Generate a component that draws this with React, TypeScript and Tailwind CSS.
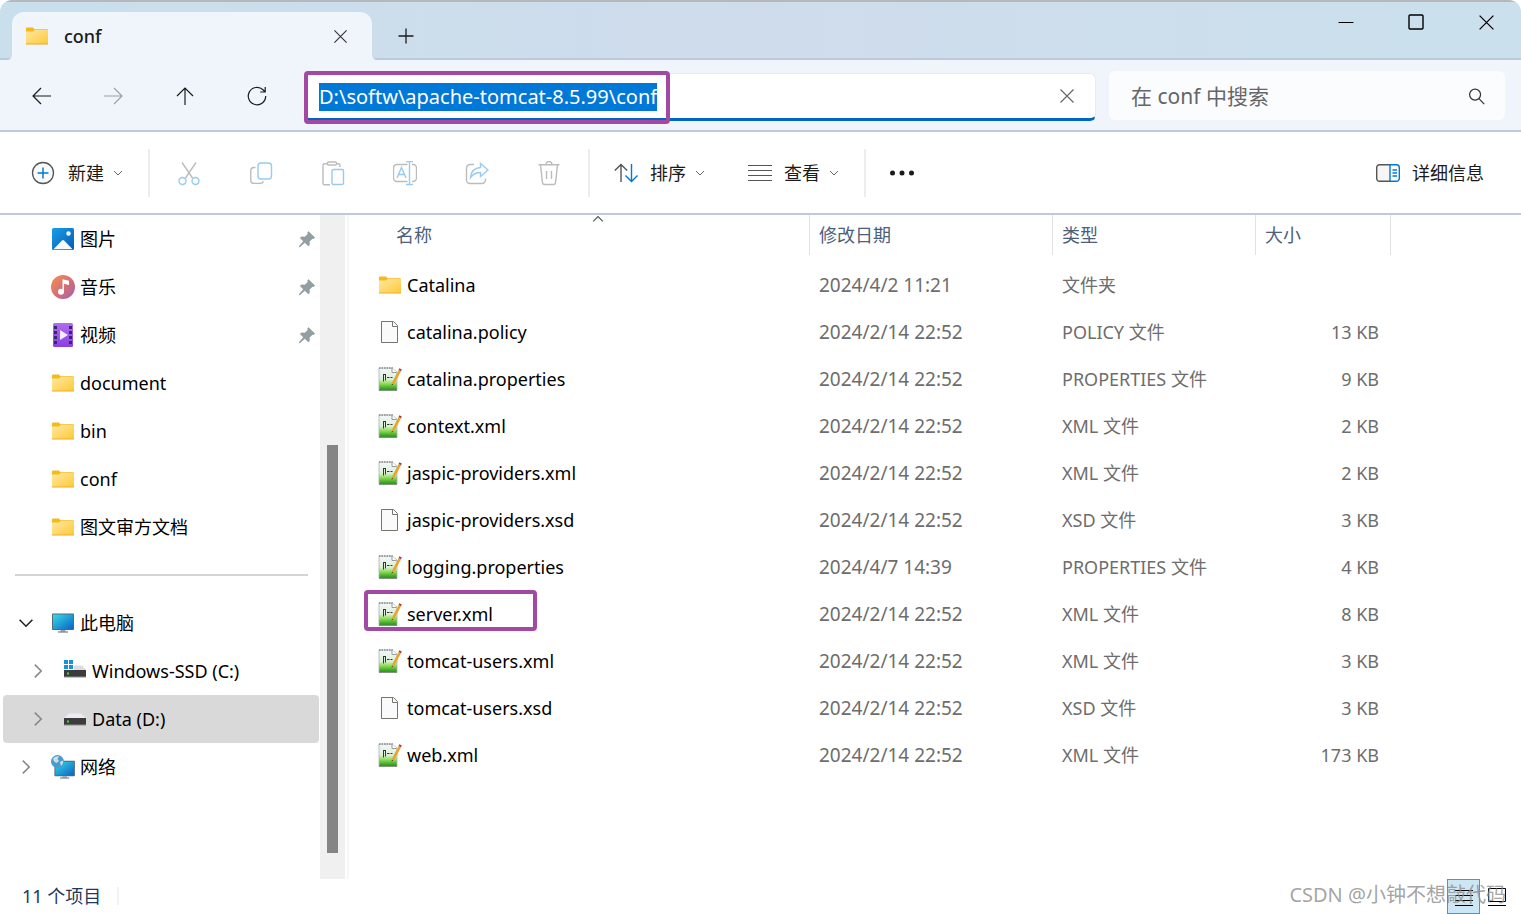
import React, { useEffect, useRef } from 'react'

type IconProps = { className?: string }

const FolderIcon: React.FC<IconProps> = ({ className = 'w-6 h-6' }) => (
  <svg viewBox="0 0 24 24" className={className} fill="none">
    <defs>
      <linearGradient id="folderFace" x1="0" y1="0" x2="1" y2="1">
        <stop offset="0" stopColor="#ffe8a3" />
        <stop offset="1" stopColor="#fdc937" />
      </linearGradient>
    </defs>
    <path d="M1 4.5a1 1 0 0 1 1-1h6l1.500 1.800H22a1 1 0 0 1 1 1V8H1z" fill="#f9b81a" />
    <path d="M1 7.500h7.200l1.400-1.600H23v14.200H1z" fill="url(#folderFace)" />
    <path d="M1 19.600h22v.9H1z" fill="#eda91c" />
  </svg>
)

const PictureIcon = () => (
  <svg viewBox="0 0 24 24" className="w-6 h-6">
    <defs>
      <linearGradient id="picBg" x1="0" y1="0" x2="1" y2="1">
        <stop offset="0" stopColor="#17a0ea" />
        <stop offset="1" stopColor="#0a59b0" />
      </linearGradient>
    </defs>
    <rect x="1" y="1" width="22" height="22" rx="1.5" fill="url(#picBg)" />
    <path d="M2.5 22.3 11 13.6a1.5 1.5 0 0 1 2.1 0l8.5 8.7z" fill="#f4f9fd" />
    <circle cx="17.5" cy="6.5" r="2.2" fill="#f4f9fd" />
  </svg>
)

const MusicIcon = () => (
  <svg viewBox="0 0 24 24" className="w-6 h-6">
    <defs>
      <linearGradient id="musicBg" x1="0" y1="0" x2="1" y2="1">
        <stop offset="0.1" stopColor="#f08a55" />
        <stop offset="0.6" stopColor="#cf6c7c" />
        <stop offset="1" stopColor="#a060b8" />
      </linearGradient>
    </defs>
    <circle cx="12" cy="12" r="12" fill="url(#musicBg)" />
    <circle cx="10" cy="16.8" r="3" fill="#fff" />
    <path d="M11.5 4.2 18 5.8v4.2l-5-1.2v8h-1.5z" fill="#fff" />
  </svg>
)

const VideoIcon = () => (
  <svg viewBox="0 0 24 24" className="w-6 h-6">
    <defs>
      <linearGradient id="videoBg" x1="0" y1="0" x2="0" y2="1">
        <stop offset="0" stopColor="#b06cf2" />
        <stop offset="1" stopColor="#8a3fe0" />
      </linearGradient>
    </defs>
    <rect x="2" y="0" width="20" height="24" rx="1.5" fill="url(#videoBg)" />
    {[3, 8, 13, 18].map((y) => (
      <g key={y} fill="#3d2470">
        <rect x="3" y={y} width="3" height="3" />
        <rect x="18" y={y} width="3" height="3" />
      </g>
    ))}
    <path d="M9 7v10l8-5z" fill="#f3ecfb" />
  </svg>
)

const MonitorShape = () => (
  <>
    <defs>
      <linearGradient id="screen" x1="0" y1="0" x2="1" y2="1">
        <stop offset="0" stopColor="#35dbe8" />
        <stop offset="1" stopColor="#0b63c4" />
      </linearGradient>
    </defs>
    <rect x="1" y="2.5" width="22" height="16.5" rx="0.8" fill="#4e6a7c" />
    <rect x="2" y="3.5" width="20" height="14.5" fill="url(#screen)" />
    <path d="M9.5 19h5v1.6h-5z" fill="#9aa5ad" />
    <path d="M7 20.5h10v1H7z" fill="#56636c" />
  </>
)

const ComputerIcon = () => (
  <svg viewBox="0 0 24 24" className="w-6 h-6">
    <MonitorShape />
  </svg>
)

const NetworkIcon = () => (
  <svg viewBox="0 0 24 24" className="w-6 h-6">
    <g transform="translate(2.5 3.5) scale(0.93)">
      <MonitorShape />
    </g>
    <circle cx="6.5" cy="6.5" r="6.5" fill="#4c9cc9" />
    <path d="M2 3.5C4 1.5 6 1 8 1.5L6.5 4 8 6l-2.5 2L3 6.5zM9 7l3-1.5c.5 2-.5 4-2 5.5z" fill="#c5e0ee" />
  </svg>
)

const DriveIcon: React.FC<{ system?: boolean }> = ({ system }) => (
  <svg viewBox="0 0 24 24" className="w-6 h-6">
    <path d={system ? 'M1 11 5 6.5h14L23 11z' : 'M1 11 6 6.5h12l5 4.5z'} fill={system ? '#dcdce2' : '#ececf0'} />
    <rect x="1" y="11" width="22" height="7" fill="#3c3c3c" />
    <path d="M1 17.5h22v1H1z" fill="#8c8c8c" />
    <rect x="4" y="13.5" width="2" height="2" fill="#2bea2b" />
    {system && (
      <>
        <path d="M0 0h11v11H0z" fill="#fff" />
        <path d="M1 1h4v4H1zM6 1h4v4H6zM1 6h4v4H1zM6 6h4v4H6z" fill="#1592dd" />
      </>
    )}
  </svg>
)

const PinIcon = () => (
  <svg viewBox="0 0 18 18" className="w-[18px] h-[18px]" fill="#929da4">
    <path d="M10.5 1.2 17 7.4l-1.5 1.5-1-.2-2.9 2.9.2 3.200-1.5 1.5-3.500-3.500L2 17l-1.200.3.300-1.300 4.100-4.700L1.900 8l1.500-1.500 3.500.3 2.800-2.900-.4-1.400z" />
  </svg>
)

const BlankFileIcon = () => (
  <svg viewBox="0 0 24 24" className="w-6 h-6" fill="#fafafa" stroke="#76746f">
    <path d="M3.5 1.5h12l4 4v17h-16z" />
    <path d="M14.5 1.5v5h5" />
  </svg>
)

const NotepadIcon = () => (
  <svg viewBox="0 0 24 24" className="w-6 h-6">
    <defs>
      <linearGradient id="npPage" x1="0" y1="0" x2="0" y2="1">
        <stop offset="0" stopColor="#f4f7fa" />
        <stop offset="0.5" stopColor="#dcefd8" />
        <stop offset="0.72" stopColor="#86d84a" />
        <stop offset="1" stopColor="#178c17" />
      </linearGradient>
    </defs>
    <path d="M1 1h13l5 4v18.5H1z" fill="url(#npPage)" stroke="#a9b2b5" strokeWidth="0.8" />
    <path d="M1 1h15" stroke="#5c6568" strokeWidth="1" strokeDasharray="1.5 1" />
    <path d="M14 1v4.5h4.5" fill="#fff" stroke="#7d8588" strokeWidth="0.8" />
    <path d="M1 23.3h18" stroke="#7c8b72" />
    <path d="M5.5 7v7.500M7.500 7v6.500" stroke="#2f3a2f" />
    <path d="M5 7.500h3M9 10.500h2.500M12.500 10.500h2" stroke="#2f3a2f" />
    <path d="m13.5 18.8 1-4L20.600 3l2.400 1.300-6.300 11.800z" fill="#e9a32c" />
    <path d="m20.600 3 .8-1.800 2.400 1.200-.8 1.900z" fill="#a83a50" />
    <path d="m13.5 18.8.5-2 1.200.8z" fill="#4a3a22" />
  </svg>
)

const Chevron: React.FC<IconProps> = ({ className }) => (
  <svg viewBox="0 0 10 10" className={className} fill="none" stroke="currentColor">
    <path d="m1 3 4 4 4-4" />
  </svg>
)

const CloseGlyph: React.FC<IconProps> = ({ className }) => (
  <svg viewBox="0 0 16 16" className={className} fill="none" stroke="currentColor" strokeWidth="1.2">
    <path d="m1.5 1.5 13 13M14.5 1.5l-13 13" />
  </svg>
)

const navButtons = [
  { label: '后退', d: 'M2 10h18M10 2l-8 8 8 8', color: 'text-[#1b1b1b]' },
  { label: '前进', d: 'M1 10h18M11 2l8 8-8 8', color: 'text-[#9da2a6]' },
  { label: '向上', d: 'M10 19V2M2 10l8-8 8 8', color: 'text-[#1b1b1b]' },
  { label: '刷新', d: 'M18.7 10A8.7 8.7 0 1 1 16 3.8l2 2M18.2 1v5h-5', color: 'text-[#1b1b1b]' },
]

const fileActions = [
  {
    label: '剪切',
    gray: 'M5 1.5 15.5 17M19 1.5 8.5 17',
    blue: 'M9 20a3.5 3.5 0 1 1-7 0 3.5 3.5 0 0 1 7 0zM22 20a3.5 3.5 0 1 1-7 0 3.5 3.5 0 0 1 7 0z',
  },
  {
    label: '复制',
    gray: 'M6.5 6.5H5A3.2 3.2 0 0 0 1.8 9.7v9.5A3.2 3.2 0 0 0 5 22.4h6.5a3.2 3.2 0 0 0 3-2.2',
    blue: 'M12 2h7.5a3 3 0 0 1 3 3v10a3 3 0 0 1-3 3H12a3 3 0 0 1-3-3V5a3 3 0 0 1 3-3z',
  },
  {
    label: '粘贴',
    gray: 'M6.5 2.8h-3A1.5 1.5 0 0 0 2 4.3v18a1.5 1.5 0 0 0 1.5 1.5H9M15.5 2.8h2A1.5 1.5 0 0 1 19 4.3V6M7.5 1h7a1 1 0 0 1 1 1v1a1 1 0 0 1-1 1h-7a1 1 0 0 1-1-1V2a1 1 0 0 1 1-1z',
    blue: 'M12.5 8.5H21a1.5 1.5 0 0 1 1.5 1.5v12a1.5 1.5 0 0 1-1.5 1.5h-8.5A1.5 1.5 0 0 1 11 22V10a1.5 1.5 0 0 1 1.5-1.5z',
  },
  {
    label: '重命名',
    gray: 'M14.5 3.5H4A3.5 3.5 0 0 0 .5 7v10A3.5 3.5 0 0 0 4 20.5h10.500M19 3.5h1A3.5 3.5 0 0 1 23.5 7v10a3.5 3.5 0 0 1-3.5 3.5h-1',
    blue: 'M13 .5h7M13 23.5h7M16.5.5v23M4 17 8.5 6.5 13 17M5.5 13.5h6',
  },
  {
    label: '共享',
    gray: 'M9 3.5H5A3.5 3.5 0 0 0 1.5 7v12A3.5 3.5 0 0 0 5 22.5h12a3.5 3.5 0 0 0 3.5-3.5v-1.5',
    blue: 'M15.5 2.5 23 9l-7.5 6.5v-4C11 11.5 8 13 5.5 16.5 6 10.5 9.5 7 15.5 6.5z',
  },
  {
    label: '删除',
    gray: 'M1.5 3.8h21M3.5 3.8l2 18a2 2 0 0 0 2 1.700h9a2 2 0 0 0 2-1.700l2-18M9 3.5a3 3 0 0 1 6 0M9.5 10v8M14.5 10v8',
    blue: '',
  },
]

const quickAccess = [
  { name: '图片', icon: PictureIcon, pinned: true },
  { name: '音乐', icon: MusicIcon, pinned: true },
  { name: '视频', icon: VideoIcon, pinned: true },
  { name: 'document', icon: FolderIcon, pinned: false },
  { name: 'bin', icon: FolderIcon, pinned: false },
  { name: 'conf', icon: FolderIcon, pinned: false },
  { name: '图文审方文档', icon: FolderIcon, pinned: false },
]

const files = [
  { name: 'Catalina', date: '2024/4/2 11:21', type: '文件夹', size: '', icon: FolderIcon },
  { name: 'catalina.policy', date: '2024/2/14 22:52', type: 'POLICY 文件', size: '13 KB', icon: BlankFileIcon },
  { name: 'catalina.properties', date: '2024/2/14 22:52', type: 'PROPERTIES 文件', size: '9 KB', icon: NotepadIcon },
  { name: 'context.xml', date: '2024/2/14 22:52', type: 'XML 文件', size: '2 KB', icon: NotepadIcon },
  { name: 'jaspic-providers.xml', date: '2024/2/14 22:52', type: 'XML 文件', size: '2 KB', icon: NotepadIcon },
  { name: 'jaspic-providers.xsd', date: '2024/2/14 22:52', type: 'XSD 文件', size: '3 KB', icon: BlankFileIcon },
  { name: 'logging.properties', date: '2024/4/7 14:39', type: 'PROPERTIES 文件', size: '4 KB', icon: NotepadIcon },
  { name: 'server.xml', date: '2024/2/14 22:52', type: 'XML 文件', size: '8 KB', icon: NotepadIcon, marked: true },
  { name: 'tomcat-users.xml', date: '2024/2/14 22:52', type: 'XML 文件', size: '3 KB', icon: NotepadIcon },
  { name: 'tomcat-users.xsd', date: '2024/2/14 22:52', type: 'XSD 文件', size: '3 KB', icon: BlankFileIcon },
  { name: 'web.xml', date: '2024/2/14 22:52', type: 'XML 文件', size: '173 KB', icon: NotepadIcon },
]

const TitleBar = () => (
  <header className="flex h-[60px] shrink-0 border-t-2 border-[#b7b8b9] bg-gradient-to-r from-[#c9dfec] via-[#cfdcec] to-[#cae0ec]">
    <div className="w-3 shrink-0 border-b-2 border-[#bccbdc]" />
    <div className="relative mt-[10px] flex w-[360px] items-center rounded-t-xl bg-[#eff5fa] pl-[13px] pr-5">
      <svg viewBox="0 0 6 6" className="absolute -left-1.5 bottom-0 w-1.5 h-1.5" fill="#eff5fa">
        <path d="M6 0v6H0c4 0 6-2 6-6z" />
      </svg>
      <svg viewBox="0 0 6 6" className="absolute -right-1.5 bottom-0 w-1.5 h-1.5" fill="#eff5fa">
        <path d="M0 0v6h6C2 6 0 4 0 0z" />
      </svg>
      <FolderIcon />
      <span className="ml-[15px] flex-1 text-lg font-medium text-[#1b1b1b]">conf</span>
      <button aria-label="关闭标签页" className="flex h-6 w-6 items-center justify-center text-[#333]">
        <CloseGlyph className="w-[15px] h-[15px]" />
      </button>
    </div>
    <div className="flex flex-1 items-start justify-between border-b-2 border-[#bccbdc]">
      <button aria-label="新建标签页" className="flex h-[68px] w-[68px] items-center justify-center">
        <svg viewBox="0 0 16 16" className="w-4 h-4" stroke="#1b1b1b" strokeWidth="1.3">
          <path d="M8 .5v15M.5 8h15" />
        </svg>
      </button>
      <div className="flex h-10">
        <button aria-label="最小化" className="flex w-[70px] items-center justify-center">
          <svg viewBox="0 0 16 16" className="w-4 h-4" stroke="#000">
            <path d="M.5 8.5h15" />
          </svg>
        </button>
        <button aria-label="最大化" className="flex w-[70px] items-center justify-center">
          <svg viewBox="0 0 16 16" className="w-4 h-4" fill="none" stroke="#000" strokeWidth="1.4">
            <rect x="1" y="1" width="14" height="14" rx="1" />
          </svg>
        </button>
        <button aria-label="关闭" className="flex w-[70px] items-center justify-center text-black">
          <CloseGlyph className="w-[17px] h-[17px]" />
        </button>
      </div>
    </div>
  </header>
)

const NavigationBar = () => {
  const addressRef = useRef<HTMLInputElement>(null)

  useEffect(() => {
    addressRef.current?.focus()
    addressRef.current?.select()
  }, [])

  return (
    <nav className="flex h-[72px] shrink-0 items-center border-b-2 border-[#bccbdc] bg-[#eff5fa] pl-[5px] pr-4">
      {navButtons.map((button) => (
        <button key={button.label} aria-label={button.label} className={`flex h-12 w-18 items-center justify-center pt-0.5 ${button.color}`}>
          <svg viewBox="0 0 20 20" className="w-5 h-5" fill="none" stroke="currentColor" strokeWidth="1.2">
            <path d={button.d} />
          </svg>
        </button>
      ))}

      <div className="relative ml-[11px] mt-1 flex h-12 flex-1 items-center rounded-md border border-b-[3px] border-[#e8ecef] border-b-[#0067c0] bg-white pl-[14px] pr-5">
        <input
          ref={addressRef}
          aria-label="地址"
          defaultValue="D:\softw\apache-tomcat-8.5.99\conf"
          className="min-w-0 flex-1 bg-transparent pt-0.5 text-xl text-[#1b1b1b] outline-none selection:bg-[#0078d7] selection:text-white"
        />
        <button aria-label="清除" className="text-[#666]">
          <CloseGlyph className="w-4 h-4" />
        </button>
        <div className="pointer-events-none absolute -left-px -top-[3px] h-[53px] w-[366px] rounded-sm border-4 border-[#a349a4]" />
      </div>

      <label className="ml-[13px] flex h-[49px] w-[396px] items-center rounded-md bg-[#fbfcfe] pl-[22px] pr-5 pt-[3px]">
        <input
          type="search"
          aria-label="搜索"
          placeholder="在 conf 中搜索"
          className="min-w-0 flex-1 bg-transparent text-[21px] text-[#1b1b1b] outline-none placeholder:text-[#666]"
        />
        <svg viewBox="0 0 18 18" className="w-[17px] h-[17px]" fill="none" stroke="#333" strokeWidth="1.3">
          <circle cx="7.5" cy="7" r="5.8" />
          <path d="m11.600 11.200 5.600 5.800" />
        </svg>
      </label>
    </nav>
  )
}

const Separator = () => <div className="h-12 w-0.5 shrink-0 bg-[#ededed]" />

const Toolbar = () => (
  <div className="flex h-[83px] shrink-0 items-center border-b-2 border-[#bccbdc] bg-white text-lg text-[#1b1b1b]">
    <button className="flex h-12 w-[148px] items-center pl-[31px]">
      <svg viewBox="0 0 24 24" className="w-6 h-6" fill="none">
        <circle cx="12" cy="12" r="10.5" stroke="#555" strokeWidth="1.3" fill="#fafafa" />
        <path d="M12 6.5v11M6.5 12h11" stroke="#0078d4" strokeWidth="1.5" />
      </svg>
      <span className="ml-[13px]">新建</span>
      <Chevron className="ml-[9px] w-2.5 h-2.5 text-[#666]" />
    </button>
    <Separator />
    <div className="flex w-[438px] px-[3px]">
      {fileActions.map((action) => (
        <button key={action.label} disabled aria-label={action.label} className="flex h-12 w-18 items-center justify-center pt-0.5">
          <svg viewBox="0 0 24 25" className="w-6 h-[25px]" fill="none" strokeWidth="1.4">
            <path d={action.gray} stroke="#bcbcbc" />
            <path d={action.blue} stroke="#99caf0" />
          </svg>
        </button>
      ))}
    </div>
    <Separator />
    <button className="ml-6 flex h-12 items-center">
      <svg viewBox="0 0 24 20" className="w-6 h-5" fill="none" strokeWidth="1.4">
        <path d="M7 19V1.5M.8 7.5 7 1.5l6.200 6" stroke="#555" />
        <path d="M17.5 1v17.5M11.5 12.5l6 6 6-6" stroke="#0078d4" />
      </svg>
      <span className="ml-3">排序</span>
      <Chevron className="ml-[9px] w-2.5 h-2.5 text-[#666]" />
    </button>
    <button className="ml-[43px] flex h-12 items-center">
      <svg viewBox="0 0 24 18" className="w-6 h-[18px]" stroke="#555" strokeWidth="1.2">
        <path d="M0 1.5h24M0 6.5h24M0 11.5h24M0 16.5h24" />
      </svg>
      <span className="ml-3">查看</span>
      <Chevron className="ml-[9px] w-2.5 h-2.5 text-[#666]" />
    </button>
    <div className="ml-[25px]">
      <Separator />
    </div>
    <button aria-label="更多" className="flex h-12 w-18 items-center justify-center">
      <svg viewBox="0 0 24 6" className="w-6 h-1.5" fill="#1b1b1b">
        <circle cx="2.5" cy="3" r="2.5" />
        <circle cx="12" cy="3" r="2.5" />
        <circle cx="21.5" cy="3" r="2.5" />
      </svg>
    </button>
    <button className="ml-auto mr-[37px] flex h-12 items-center">
      <svg viewBox="0 0 24 18" className="w-6 h-[18px]" fill="none" strokeWidth="1.4">
        <path d="M14 .7H3.5A2.8 2.8 0 0 0 .7 3.5v11a2.8 2.8 0 0 0 2.8 2.8H14" stroke="#555" fill="#f6f6f6" />
        <path d="M14 .7h6.500a2.8 2.8 0 0 1 2.8 2.8v11a2.8 2.8 0 0 1-2.8 2.8H14zM16.5 6H21M16.5 9H21M16.5 12H21" stroke="#0078d4" />
      </svg>
      <span className="ml-3">详细信息</span>
    </button>
  </div>
)

const Sidebar = () => (
  <aside className="flex w-[349px] shrink-0 border-r-2 border-[#f7f7f7]">
    <div className="w-80 text-lg text-black">
      {quickAccess.map((item) => (
        <a key={item.name} href="#" className="flex h-12 items-center pl-[51px] pr-1">
          <item.icon />
          <span className="ml-[5px] flex-1">{item.name}</span>
          {item.pinned && <PinIcon />}
        </a>
      ))}
      <div className="flex h-12 items-center pl-[15px] pr-3">
        <hr className="w-full border-t-2 border-[#d5d5d5]" />
      </div>
      <a href="#" className="flex h-12 items-center pl-[18px]">
        <Chevron className="w-4 h-4 text-[#222]" />
        <span className="ml-[17px]"><ComputerIcon /></span>
        <span className="ml-[5px]">此电脑</span>
      </a>
      <a href="#" className="flex h-12 items-center pl-[30px]">
        <Chevron className="w-4 h-4 -rotate-90 text-[#888]" />
        <span className="ml-[17px]"><DriveIcon system /></span>
        <span className="ml-[5px]">Windows-SSD (C:)</span>
      </a>
      <a href="#" className="ml-[3px] mr-px flex h-12 items-center rounded-sm bg-[#d9d9d9] pl-[27px]">
        <Chevron className="w-4 h-4 -rotate-90 text-[#888]" />
        <span className="ml-[17px]"><DriveIcon /></span>
        <span className="ml-[5px]">Data (D:)</span>
      </a>
      <a href="#" className="flex h-12 items-center pl-[18px]">
        <Chevron className="w-4 h-4 -rotate-90 text-[#888]" />
        <span className="ml-[17px]"><NetworkIcon /></span>
        <span className="ml-[5px]">网络</span>
      </a>
    </div>
    {/* scrollbar */}
    <div className="flex w-[25px] flex-col items-center bg-[#f0f0f0] pb-[26px] pt-[230px]">
      <div className="w-[11px] flex-1 bg-[#858585]" />
    </div>
  </aside>
)

const FileTable = () => (
  <main className="min-w-0 flex-1">
    <table className="w-full table-fixed border-collapse text-left text-lg/[27px] text-[#6d6d6d]">
      <thead className="text-[#4c607a]">
        <tr className="h-[47px] align-top">
          <th className="w-[461px] p-0 font-normal">
            <div className="relative flex h-10 items-center border-r border-[#e2e2e2] pl-[47px]">
              名称
              <Chevron className="absolute left-[243px] -top-0.5 w-3 h-3 rotate-180 text-[#555]" />
            </div>
          </th>
          <th className="w-[243px] p-0 font-normal">
            <div className="flex h-10 items-center border-r border-[#e2e2e2] pl-[9px]">修改日期</div>
          </th>
          <th className="w-[203px] p-0 font-normal">
            <div className="flex h-10 items-center border-r border-[#e2e2e2] pl-[9px]">类型</div>
          </th>
          <th className="w-[135px] p-0 font-normal">
            <div className="flex h-10 items-center border-r border-[#e2e2e2] pl-[9px]">大小</div>
          </th>
          <th aria-hidden="true" />
        </tr>
      </thead>
      <tbody>
        {files.map((file) => (
          <tr key={file.name} className="h-[47px]">
            <td className="p-0 text-black">
              <div className="relative flex h-[47px] items-center pb-px pl-[29px]">
                <file.icon />
                <span className="ml-[5px]">{file.name}</span>
                {file.marked && (
                  <div className="absolute left-[15px] -top-px h-[41px] w-[173px] rounded-sm border-4 border-[#a349a4]" />
                )}
              </div>
            </td>
            <td className="p-0 pl-[9px] text-[19px]">{file.date}</td>
            <td className="p-0 pl-[9px]">{file.type}</td>
            <td className="p-0 pr-3 text-right">{file.size}</td>
            <td />
          </tr>
        ))}
      </tbody>
    </table>
  </main>
)

const StatusBar = () => (
  <footer className="relative flex h-[35px] shrink-0 items-stretch justify-between pl-[22px] pr-2">
    <div className="flex items-center pb-px text-lg text-[#1e395b]">
      <span>11 个项目</span>
      <div className="ml-4 h-[18px] w-0.5 bg-[#f2f2f2]" />
    </div>
    <div className="flex">
      <button aria-label="详细信息视图" className="flex w-[33px] items-center justify-center border border-[#3c9ccc] bg-[#cce6f4]">
        <svg viewBox="0 0 18 18" className="w-[18px] h-[18px]" stroke="#000">
          <path d="M0 2.500h18M0 7.500h18M0 12.500h18M0 17.500h18" />
        </svg>
      </button>
      <button aria-label="大图标视图" className="flex w-[33px] items-center justify-center">
        <svg viewBox="0 0 18 18" className="w-[18px] h-[18px]" fill="none" stroke="#000">
          <path d="M.5.5h17v13H.5zM0 17.5h18" />
        </svg>
      </button>
    </div>
    <span className="pointer-events-none absolute right-[15px] top-0 text-xl/8 text-[#8c8c8c]/80">CSDN @小钟不想敲代码</span>
  </footer>
)

const App: React.FC = () => {
  return (
    <div className="flex min-h-screen flex-col overflow-hidden rounded-xl bg-white font-['Noto_Sans','Noto_Sans_CJK_SC',sans-serif]">
      <TitleBar />
      <NavigationBar />
      <Toolbar />
      <div className="flex flex-1">
        <Sidebar />
        <FileTable />
      </div>
      <StatusBar />
    </div>
  )
}

export default App
